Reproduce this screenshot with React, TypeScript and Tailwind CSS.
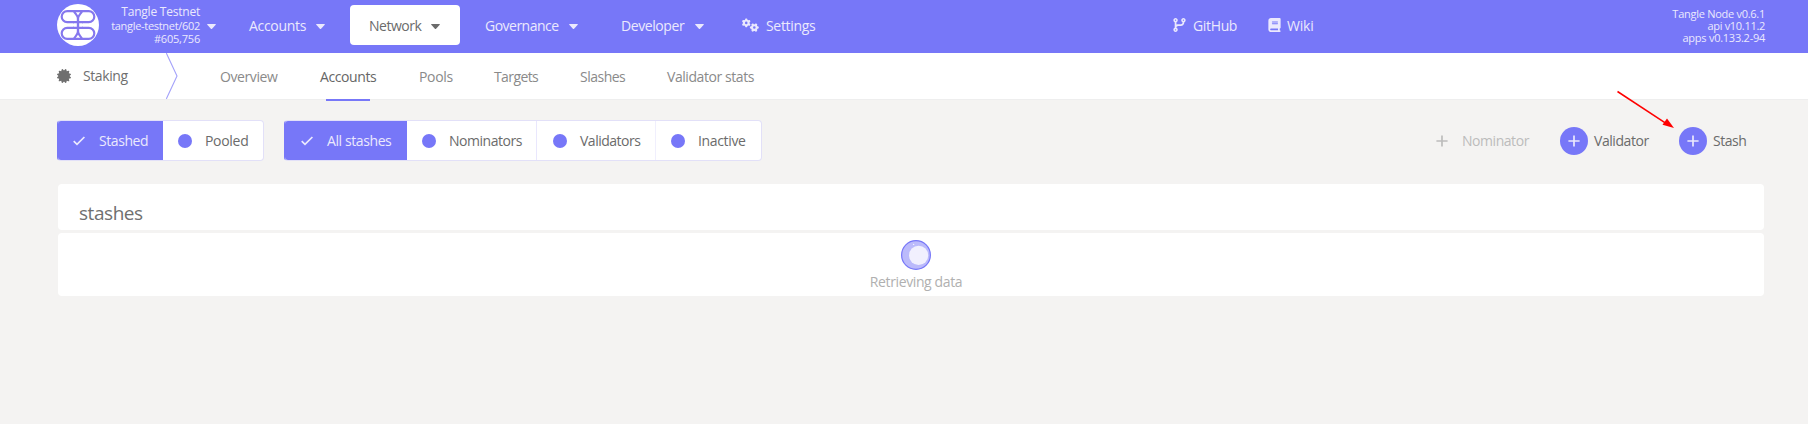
import React from "react";
import { FaCertificate } from "react-icons/fa";
import { FaBook, FaCodeBranch, FaGears } from "react-icons/fa6";

function Label({ className, children }: { className: string; children: string }) {
  return <span className={`block shrink-0 whitespace-nowrap ${className}`}>{children}</span>;
}

function Caret({ className = "" }: { className?: string }) {
  return (
    <svg viewBox="0 0 9 5" className={`h-[5px] w-[9px] shrink-0 ${className}`} fill="currentColor">
      <path d="M0.6 0h7.8q.8.1.3.8L5.1 4.7q-.6.5-1.2 0L.3.8Q-.2.1.6 0z" />
    </svg>
  );
}

function Logo() {
  return (
    <svg viewBox="0 0 42 42" className="h-[42px] w-[42px] shrink-0">
      <circle cx="21" cy="21" r="21" fill="#fff" />
      <g fill="none" stroke="#8577ee" strokeWidth="2.2">
        <path d="M17 18.2H10.2A5.4 5.4 0 0 1 10.2 7.2H31.8A5.4 5.4 0 0 1 31.8 18.2H25" />
        <path d="M17 23.8H10.2A5.4 5.4 0 0 0 10.2 34.8H31.8A5.4 5.4 0 0 0 31.8 23.8H25" />
        <path d="M17 7.2C18.5 10.5 21 11 21 15V27C21 31 18.5 31.5 17 34.8" />
        <path d="M25 7.2C23.5 10.5 21 11 21 15V27C21 31 23.5 31.5 25 34.8" />
        <path d="M16 18.2H26M16 23.8H26" />
      </g>
    </svg>
  );
}

function Check() {
  return (
    <svg viewBox="0 0 12 10" className="h-[10px] w-[12px] shrink-0" fill="none" stroke="#ebe9fd" strokeWidth="1.7">
      <path d="M.7 5.2 4 8.4 11.4 1" />
    </svg>
  );
}

function Plus({ className = "" }: { className?: string }) {
  return (
    <svg viewBox="0 0 12 12" className={`h-3 w-3 shrink-0 ${className}`} fill="none" stroke="currentColor" strokeWidth="1.7">
      <path d="M6 .4v11.2M.4 6h11.2" />
    </svg>
  );
}

function Dot() {
  return <span className="block h-[14px] w-[14px] shrink-0 rounded-full bg-[#7777f8]" />;
}

function Header() {
  return (
    <header className="flex h-[53px] items-start bg-[#7777f8] pl-[57px] text-[#ebe9fd]">
      <div className="mt-1 flex">
        <Logo />
      </div>
      <div className="mt-[5px] flex w-[101px] flex-col items-end text-[12px] leading-[13.5px]">
        <Label className="tracking-[-0.22px]">Tangle Testnet</Label>
        <Label className="text-[11px] tracking-[-0.3px]">tangle-testnet/602</Label>
        <Label className="text-[11px] tracking-[-0.2px]">#605,756</Label>
      </div>
      <div className="flex h-[50px] items-center">
        <Caret className="mt-[2px] ml-[7px]" />
        <Label className="mt-[2px] ml-[33px] w-[67px] tracking-[-0.3px]">Accounts</Label>
        <Caret className="mt-[2px]" />
        <div className="ml-[25px] flex h-10 w-[110px] items-center rounded-[4px] bg-white pl-[19px] text-[#6b6b6b]">
          <Label className="mt-[2px] w-[62px] tracking-[-0.5px]">Network</Label>
          <Caret className="mt-[2px]" />
        </div>
        <Label className="mt-[2px] ml-[25px] w-[84px] tracking-[-0.52px]">Governance</Label>
        <Caret className="mt-[2px]" />
        <Label className="mt-[2px] ml-[43px] w-[74px] tracking-[-0.42px]">Developer</Label>
        <Caret className="mt-[2px]" />
        <FaGears className="ml-[38px] h-[14px] w-[17px]" />
        <Label className="mt-[2px] ml-[7px] w-[407px] tracking-[-0.33px]">Settings</Label>
        <FaCodeBranch className="h-[14px] w-[13px]" />
        <Label className="mt-[2px] ml-[7px] w-[75px] tracking-[-0.35px]">GitHub</Label>
        <FaBook className="h-[14px] w-[13px]" />
        <Label className="mt-[2px] ml-[6px] tracking-[-0.2px]">Wiki</Label>
      </div>
      <div className="mt-2 mr-[43px] ml-auto flex flex-col items-end text-[11px] leading-3">
        <Label className="tracking-[-0.27px]">Tangle Node v0.6.1</Label>
        <Label className="tracking-[-0.3px]">api v10.11.2</Label>
        <Label className="tracking-[-0.25px]">apps v0.133.2-94</Label>
      </div>
    </header>
  );
}

function Tabs() {
  return (
    <nav className="flex h-[47px] items-start border-b border-[#eeeeee] bg-white pl-[57px] text-[#8a8a8a]">
      <div className="flex h-[46px] items-center text-[#6f6f6f]">
        <FaCertificate className="h-[14px] w-[14px]" />
        <Label className="ml-[12px] w-[83px] tracking-[-0.4px]">Staking</Label>
        <svg viewBox="0 0 12 46" className="h-[46px] w-3" fill="none" stroke="#a4a2fa" strokeWidth="1.1">
          <path d="M.3 0 11 23 .3 46" />
        </svg>
      </div>
      <div className="flex h-12 items-center">
        <Label className="ml-[42px] w-[100px] tracking-[-0.4px]">Overview</Label>
        <div className="relative w-[99px] text-[#666]">
          <Label className="tracking-[-0.4px]">Accounts</Label>
          <span className="absolute top-[32px] left-[6px] block h-[2px] w-[44px] bg-[#7777f8]" />
        </div>
        <Label className="w-[75px] tracking-[-0.35px]">Pools</Label>
        <Label className="w-[86px] tracking-[-0.6px]">Targets</Label>
        <Label className="w-[87px] tracking-[-0.5px]">Slashes</Label>
        <Label className="tracking-[-0.43px]">Validator stats</Label>
      </div>
    </nav>
  );
}

function Controls() {
  return (
    <div className="flex h-[41px] items-center text-[#6b6b6b]">
      <div className="flex h-[41px] w-[207px] overflow-hidden rounded-[4px] border border-[#e2e0f8] border-l-[#7777f8] bg-white">
        <div className="flex w-[105px] items-center bg-[#7777f8] pl-[15px] text-[#ebe9fd]">
          <Check />
          <Label className="mt-px ml-[14px] tracking-[-0.42px]">Stashed</Label>
        </div>
        <div className="flex items-center pl-[15px]">
          <Dot />
          <Label className="mt-px ml-[13px] tracking-[-0.3px]">Pooled</Label>
        </div>
      </div>
      <div className="ml-5 flex h-[41px] w-[478px] overflow-hidden rounded-[4px] border border-[#e2e0f8] border-l-[#7777f8] bg-white">
        <div className="flex w-[122px] items-center bg-[#7777f8] pl-4 text-[#ebe9fd]">
          <Check />
          <Label className="mt-px ml-[14px] tracking-[-0.4px]">All stashes</Label>
        </div>
        <div className="flex w-[130px] items-center border-r border-[#e9e7fd] pl-[15px]">
          <Dot />
          <Label className="mt-px ml-[13px] tracking-[-0.48px]">Nominators</Label>
        </div>
        <div className="flex w-[119px] items-center border-r border-[#f0effd] pl-4">
          <Dot />
          <Label className="mt-px ml-[13px] tracking-[-0.5px]">Validators</Label>
        </div>
        <div className="flex items-center pl-[15px]">
          <Dot />
          <Label className="mt-px ml-[13px] tracking-[-0.35px]">Inactive</Label>
        </div>
      </div>
      <div className="ml-[674px] flex items-center">
        <Plus className="text-[#bcbcbc]" />
        <Label className="mt-px ml-[14px] w-[98px] tracking-[-0.45px] text-[#bcbcbc]">Nominator</Label>
        <span className="flex h-7 w-7 items-center justify-center rounded-full bg-[#7777f8] text-[#ebe9fd]">
          <Plus />
        </span>
        <Label className="mt-px ml-[6px] w-[85px] tracking-[-0.44px]">Validator</Label>
        <span className="flex h-7 w-7 items-center justify-center rounded-full bg-[#7777f8] text-[#ebe9fd]">
          <Plus />
        </span>
        <Label className="mt-px ml-[6px] tracking-[-0.45px]">Stash</Label>
      </div>
    </div>
  );
}

export default function App() {
  return (
    <div className="relative h-[424px] w-[1808px] overflow-hidden bg-[#f4f3f2] font-['Open_Sans','Noto_Sans',sans-serif] text-[14px] leading-5">
      <Header />
      <Tabs />
      <main className="pt-5 pl-[57px]">
        <Controls />
        <section className="mt-[23px] ml-px flex w-[1706px] flex-col gap-[3px]">
          <div className="flex h-[46px] items-center rounded-[4px] bg-white pt-3 pl-[21px] text-[#6f6f6f]">
            <Label className="text-[19px] tracking-[-0.45px]">stashes</Label>
          </div>
          <div className="flex h-[63px] flex-col items-center rounded-[4px] bg-white pt-[7px] text-[#b0b0b0]">
            <svg viewBox="0 0 30 30" className="ml-[10px] h-[30px] w-[30px] shrink-0">
              <circle cx="15" cy="15" r="14.4" fill="#bbbafb" stroke="#7777f8" strokeWidth="1.2" />
              <circle cx="17.6" cy="15.4" r="9.6" fill="#f1f0fe" />
              <circle cx="12.6" cy="4.4" r=".7" fill="#f1f0fe" />
            </svg>
            <Label className="mt-[2px] ml-[10px] tracking-[-0.38px]">Retrieving data</Label>
          </div>
        </section>
      </main>
      <svg viewBox="0 0 60 42" className="absolute top-[89px] left-[1616px] h-[42px] w-[60px]">
        <path d="M1.5 2.5 50 34.3" stroke="#f00" strokeWidth="1.5" fill="none" />
        <path d="M58 39 46.5 35.7 51 29.6z" fill="#f00" />
      </svg>
    </div>
  );
}
